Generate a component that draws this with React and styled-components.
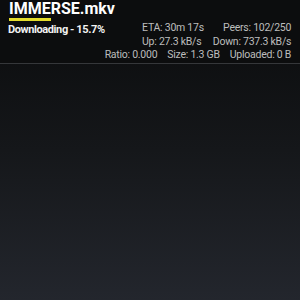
import React from 'react';
import styled, { createGlobalStyle } from 'styled-components';

const Global = createGlobalStyle`
    html, body {
        margin: 0;
        padding: 0;
        height: 100%;
    }
    body {
        background: linear-gradient(to bottom, #0a0b0c 0%, #15171a 50%, #23262d 100%);
        font-family: Roboto, "Noto Sans", sans-serif;
    }
    #root {
        height: 100%;
    }
`;

const Screen = styled.div`
    width: 300px;
    height: 300px;
    overflow: hidden;
`;

const TorrentRow = styled.div`
    padding: 1px 9px 1px 9px;
    background-color: #0c0d0e;
    border-bottom: 1px solid #35373a;
`;

const Title = styled.div`
    color: #ffffff;
    font-size: 16px;
    font-weight: 700;
    line-height: 16px;
    white-space: nowrap;
`;

const Progress = styled.div`
    width: 42px;
    height: 3px;
    margin-top: 1px;
    background-color: #e4dd2c;
`;

const Body = styled.div`
    display: flex;
    justify-content: space-between;
    align-items: flex-start;
`;

const Status = styled.div`
    color: #f2f2f2;
    font-size: 11px;
    font-weight: 700;
    letter-spacing: -0.4px;
    line-height: 14px;
    margin-top: 2px;
    margin-left: -1px;
    white-space: nowrap;
`;

const Stats = styled.div`
    display: flex;
    flex-direction: column;
    align-items: flex-end;
    flex-shrink: 0;
    color: #bdbdbd;
    font-size: 10.5px;
    letter-spacing: -0.25px;
    line-height: 13.5px;
    white-space: nowrap;
`;

const StatGrid = styled.div`
    display: grid;
    grid-template-columns: auto auto;
    column-gap: 9px;
`;

const Cell = styled.span`
    justify-self: ${(p) => (p.$end ? 'end' : 'start')};
`;

const StatLine = styled.div`
    display: flex;
    gap: 10px;
`;

function App() {
    return (
        <Screen>
            <Global />
            <TorrentRow>
                <Title>IMMERSE.mkv</Title>
                <Progress />
                <Body>
                    <Status>Downloading - 15.7%</Status>
                    <Stats>
                        <StatGrid>
                            <Cell>ETA: 30m 17s</Cell>
                            <Cell $end>Peers: 102/250</Cell>
                            <Cell>Up: 27.3 kB/s</Cell>
                            <Cell $end>Down: 737.3 kB/s</Cell>
                        </StatGrid>
                        <StatLine>
                            <span>Ratio: 0.000</span>
                            <span>Size: 1.3 GB</span>
                            <span>Uploaded: 0 B</span>
                        </StatLine>
                    </Stats>
                </Body>
            </TorrentRow>
        </Screen>
    );
}
export default App
